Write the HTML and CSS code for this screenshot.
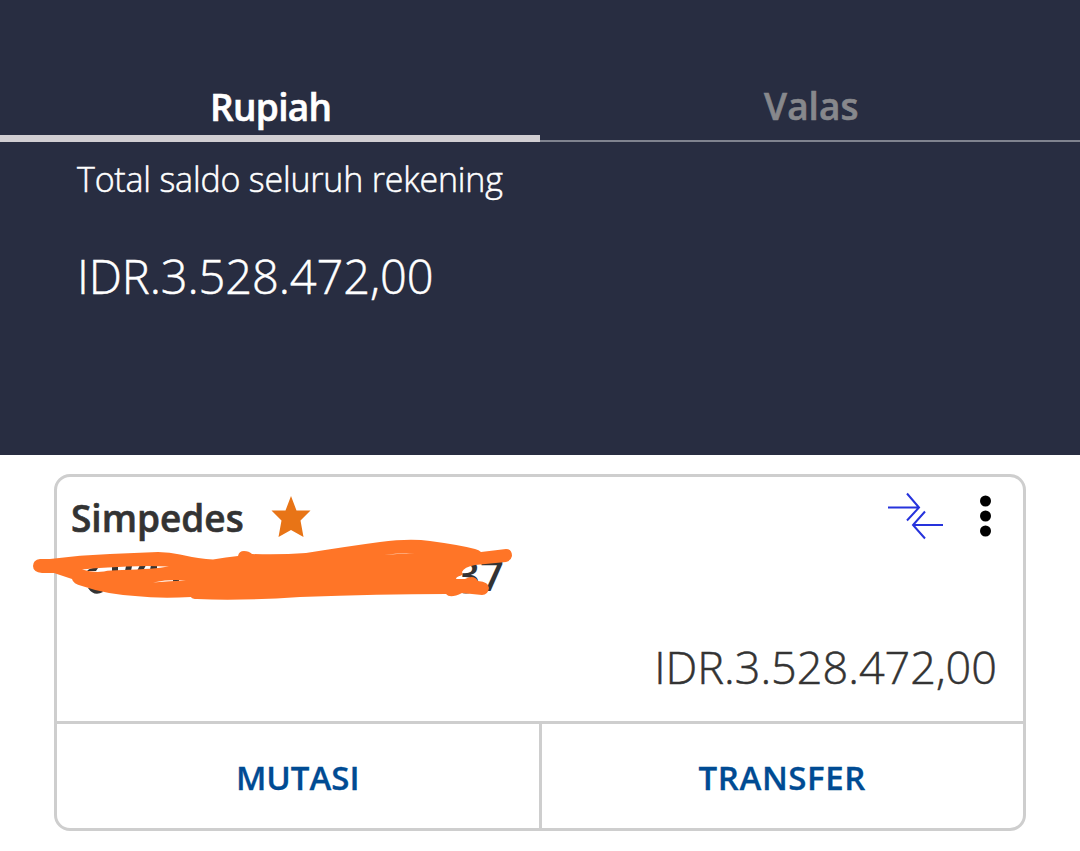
FILE: index.html
```html
<!DOCTYPE html>
<html lang="id">
<head>
    <meta charset="UTF-8">
    <title>Rekening</title>
    <link rel="stylesheet" href="styles.css">
</head>
<body>
<div class="header">
    <div class="tabs">
        <div class="tab active"><span>Rupiah</span></div>
        <div class="tab"><span>Valas</span></div>
    </div>
    <div class="total">
        <div class="total-label"><span>Total saldo seluruh rekening</span></div>
        <div class="total-value"><span>IDR.3.528.472,00</span></div>
    </div>
</div>

<div class="card">
    <div class="card-body">
        <div class="card-top">
            <span class="card-name">Simpedes</span>
            <svg class="star" width="40" height="42" viewBox="0 0 40 42">
                <path d="M20 0L25.500 14.500H39.500L29.500 24.500L32.500 41L20 34L7.500 41L10.500 24.500L.5 14.500H14.500Z" fill="#e87416"/>
            </svg>
            <svg class="arrows" width="56" height="48" viewBox="0 0 56 48" fill="none" stroke="#2633dc" stroke-width="2">
                <path d="M0 15.500H30M19 1.500L31 15.500L19 28.500M55 33H25M37 19.500L25 33L37 46.500"/>
            </svg>
            <svg class="more" width="12" height="44" viewBox="0 0 12 44">
                <circle cx="6.500" cy="6" r="5.500"/>
                <circle cx="6.500" cy="21" r="5.500"/>
                <circle cx="6.500" cy="36" r="5.500"/>
            </svg>
        </div>
        <div class="card-number">37</div>
        <div class="card-balance"><span>IDR.3.528.472,00</span></div>
    </div>
    <div class="card-actions">
        <div class="action"><span>MUTASI</span></div>
        <div class="action transfer"><span>TRANSFER</span></div>
    </div>
    <!-- marker stroke over the account number -->
    <svg class="scribble" width="490" height="70" viewBox="30 535 490 70">
        <path fill="#333" d="M87 571Q91 567 98 568L96 571ZM112 566H118V571H112ZM126 566H132L131 571H125ZM140 565H146L143 571H137ZM151 565H157V570H150ZM88 588Q94 597 103 592L100 588ZM173 580H179V582H173ZM435 592Q440 595 446 592ZM460 592Q466 595 472 592Z"/>
        <path fill="#ff7527" fill-rule="evenodd" d="M40 559L50 559Q80 555 110 554L158 552Q170 552 180 554.500Q200 559 213 559.500Q226 557 238 556Q239 551 244 551Q249 551 252 554Q280 555 306 553Q350 546 380 542Q410 538 430 541Q460 545 475 549Q479 550 481 552L506 549Q512 549 512 556Q511 561 506 562L475 565Q464 567 462 572C464 577 457 575 456 579H465Q474 574 478 581Q489 582 489 588Q488 595 482 595L462 593Q450 599 446 594Q380 594 300 597Q240 601 197 599Q192 599 191 597Q160 599 135 596Q105 594 82 586Q73 584 72 579L54 573L42 573Q33 572 33 566Q33 560 40 559ZM82 569.500Q95 568 108 567.500Q140 565 169 566.500Q154 569 122 570Q110 570 104 571.500Q93 573 82 569.500ZM153 582.500Q170 579 186 580.500Q170 581 153 582.500ZM384 555Q400 552.500 415 553.500Q401 553 384 555Z"/>
    </svg>
</div>
</body>
</html>
```

FILE: styles.css
```css
* {
    box-sizing: border-box;
}

body {
    margin: 0;
    background: #fff;
    color: #333;
    font-family: "Open Sans", "Noto Sans", sans-serif;
}

span {
    white-space: nowrap;
}

.header {
    height: 455px;
    background: #282d41;
    color: #fff;
}

.tabs {
    display: flex;
    height: 142px;
}

.tab {
    flex: 1;
    display: flex;
    align-items: flex-end;
    justify-content: center;
    padding: 0 0 9px 3px;
    border-bottom: 2px solid #80838f;
    font-size: 37px;
    line-height: 50px;
    font-weight: 600;
    color: #87888c;
    -webkit-text-stroke: 0.6px;
}

.tab.active {
    padding: 0 0 3px 2px;
    border-bottom: 7px solid #d1ced2;
    color: #fff;
    letter-spacing: -0.7px;
}

.total {
    padding-left: 77px;
    font-weight: 300;
    -webkit-text-stroke: 0.5px;
}

.total-label {
    padding-top: 12px;
    font-size: 34px;
    line-height: 50px;
    letter-spacing: -0.2px;
}

.total-value {
    margin-top: 40px;
    font-size: 47px;
    line-height: 64px;
    letter-spacing: -0.1px;
}

.card {
    position: relative;
    width: 972px;
    height: 357px;
    margin: 19px 0 0 54px;
    border: 3px solid #cecece;
    border-radius: 16px;
}

.card-body {
    height: 244px;
    padding: 16px 26px 0 14px;
}

.card-top {
    display: flex;
    align-items: flex-start;
    height: 50px;
}

.card-name {
    width: 200px;
    font-size: 37px;
    line-height: 50px;
    font-weight: 600;
    -webkit-text-stroke: 0.6px;
}

.star {
    margin-top: 3px;
}

.arrows {
    margin: -1px 0 0 577px;
}

.more {
    margin: 2px 0 0 35px;
}

.card-number {
    padding-left: 385px;
    font-size: 42px;
    line-height: 64px;
    font-weight: 600;
}

.card-balance {
    margin-top: 28px;
    text-align: right;
    font-size: 45px;
    line-height: 64px;
    font-weight: 300;
    -webkit-text-stroke: 0.5px;
}

.card-actions {
    display: flex;
    height: 107px;
    border-top: 3px solid #cecece;
}

.action {
    flex: 1;
    display: flex;
    align-items: center;
    justify-content: center;
    padding-top: 3px;
    font-size: 33px;
    font-weight: 600;
    color: #004b93;
    -webkit-text-stroke: 0.3px;
}

.action + .action {
    border-left: 3px solid #cecece;
}

.transfer {
    letter-spacing: 0.6px;
}

.scribble {
    position: absolute;
    left: -27px;
    top: 58px;
}
```
